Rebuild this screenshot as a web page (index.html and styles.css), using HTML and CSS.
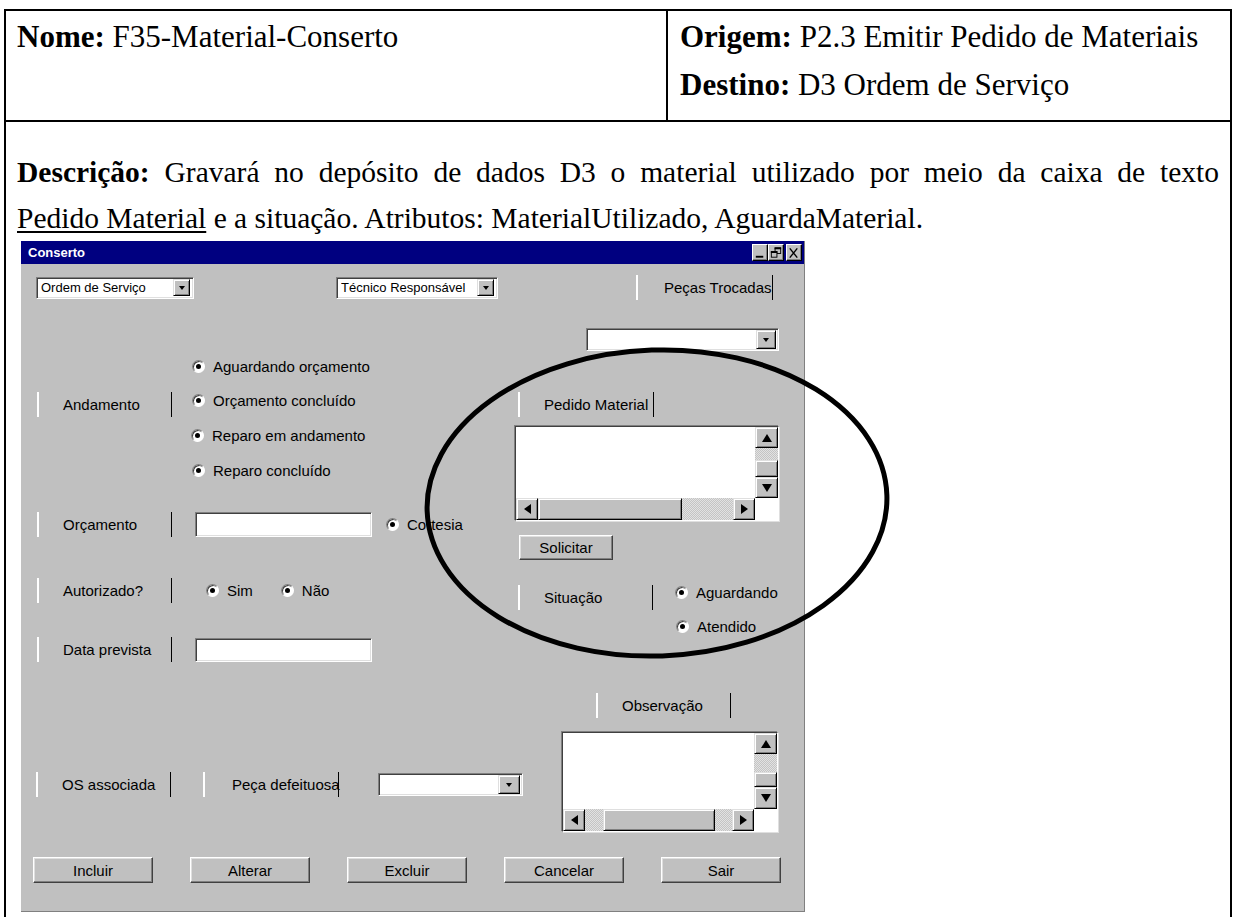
FILE: index.html
```html
<!DOCTYPE html>
<html lang="pt-BR">
<head>
<meta charset="utf-8">
<title>F35-Material-Conserto</title>
<link rel="stylesheet" href="styles.css">
</head>
<body>
<div class="sheet">
  <div class="head">
    <div class="cell cell-name">
      <p><b>Nome:</b> F35-Material-Conserto</p>
    </div>
    <div class="cell cell-flow">
      <p><b>Origem:</b> P2.3 Emitir Pedido de Materiais</p>
      <p><b>Destino:</b> D3 Ordem de Serviço</p>
    </div>
  </div>
  <div class="cell cell-desc">
    <p class="desc"><b>Descrição:</b> Gravará no depósito de dados D3 o material utilizado por meio da caixa de texto <u>Pedido&nbsp;Material</u> e a situação. Atributos: MaterialUtilizado, AguardaMaterial.</p>

    <div class="win">
      <div class="titlebar">
        <span class="title">Conserto</span>
        <div class="tbtns">
          <span class="tbtn"><svg width="15" height="14" viewBox="0 0 15 14"><rect x="3" y="10" width="8" height="2" fill="#000"/></svg></span>
          <span class="tbtn"><svg width="15" height="14" viewBox="0 0 15 14"><rect x="6.5" y="1.5" width="6" height="6" fill="none" stroke="#000"/><rect x="6" y="1" width="7" height="2" fill="#000"/><rect x="2.5" y="5.5" width="6" height="6" fill="#c0c0c0" stroke="#000"/><rect x="2" y="5" width="7" height="2" fill="#000"/></svg></span>
          <span class="tbtn tbtn-close"><svg width="15" height="14" viewBox="0 0 15 14"><path d="M3 2 L11 12 M11 2 L3 12" stroke="#000" stroke-width="1.5"/></svg></span>
        </div>
      </div>

      <div class="form">
        <div class="row-top">
          <div class="combo combo-os"><span class="combo-text">Ordem de Serviço</span><span class="drop drop-sm"><i class="tri-sm"></i></span></div>
          <div class="combo combo-tec"><span class="combo-text">Técnico Responsável</span><span class="drop drop-sm"><i class="tri-sm"></i></span></div>
          <div class="lbl lbl-pecas">Peças Trocadas</div>
        </div>

        <div class="mid">
          <div class="mid-left">
            <div class="andamento">
              <div class="lbl lbl-and">Andamento</div>
              <div class="radios radios-and">
                <div class="opt"><span class="radio"></span>Aguardando orçamento</div>
                <div class="opt"><span class="radio"></span>Orçamento concluído</div>
                <div class="opt opt-shift"><span class="radio"></span>Reparo em andamento</div>
                <div class="opt"><span class="radio"></span>Reparo concluído</div>
              </div>
            </div>
            <div class="frow frow-orc">
              <div class="lbl">Orçamento</div>
              <div class="field"></div>
              <div class="opt opt-cortesia"><span class="radio"></span>Cortesia</div>
            </div>
            <div class="frow frow-aut">
              <div class="lbl">Autorizado?</div>
              <div class="opt opt-sim"><span class="radio"></span>Sim</div>
              <div class="opt opt-nao"><span class="radio"></span>Não</div>
            </div>
            <div class="frow frow-data">
              <div class="lbl">Data prevista</div>
              <div class="field field-data"></div>
            </div>
          </div>

          <div class="mid-right">
            <div class="combo combo-pecas"><span class="combo-text"></span><span class="drop"><i class="tri-sm"></i></span></div>
            <div class="lbl lbl-pedido">Pedido Material</div>
            <div class="memo memo-pedido">
              <div class="memo-text"></div>
              <div class="vsb">
                <span class="sbtn sb-v"><i class="arr arr-up"></i></span>
                <span class="track track-a"></span>
                <span class="thumb thumb-v1"></span>
                <span class="sbtn sb-v"><i class="arr arr-down"></i></span>
              </div>
              <div class="hsb">
                <span class="sbtn sb-h"><i class="arr arr-left"></i></span>
                <span class="thumb thumb-h1"></span>
                <span class="track"></span>
                <span class="sbtn sb-h"><i class="arr arr-right"></i></span>
              </div>
              <div class="corner"></div>
            </div>
            <div class="btn btn-sol">Solicitar</div>
            <div class="situacao">
              <div class="lbl lbl-sit">Situação</div>
              <div class="radios radios-sit">
                <div class="opt"><span class="radio"></span>Aguardando</div>
                <div class="opt opt-atendido"><span class="radio"></span>Atendido</div>
              </div>
            </div>
          </div>
        </div>

        <div class="low">
          <div class="low-left">
            <div class="frow frow-os">
              <div class="lbl">OS associada</div>
              <div class="lbl lbl-peca">Peça defeituosa</div>
              <div class="combo combo-peca"><span class="combo-text"></span><span class="drop"><i class="tri-sm"></i></span></div>
            </div>
          </div>
          <div class="low-right">
            <div class="lbl lbl-obs">Observação</div>
            <div class="memo memo-obs">
              <div class="memo-text"></div>
              <div class="vsb">
                <span class="sbtn sb-v"><i class="arr arr-up"></i></span>
                <span class="track track-b"></span>
                <span class="thumb thumb-v2"></span>
                <span class="sbtn sb-v"><i class="arr arr-down"></i></span>
              </div>
              <div class="hsb">
                <span class="sbtn sb-h"><i class="arr arr-left"></i></span>
                <span class="track track-c"></span>
                <span class="thumb thumb-h2"></span>
                <span class="track"></span>
                <span class="sbtn sb-h"><i class="arr arr-right"></i></span>
              </div>
              <div class="corner"></div>
            </div>
          </div>
        </div>

        <div class="btnrow">
          <div class="btn">Incluir</div>
          <div class="btn">Alterar</div>
          <div class="btn">Excluir</div>
          <div class="btn">Cancelar</div>
          <div class="btn">Sair</div>
        </div>
      </div>
    </div>
  </div>
</div>

<!-- hand-drawn highlight around the material request area -->
<svg class="ring" width="1235" height="917" viewBox="0 0 1235 917">
  <ellipse cx="657" cy="503" rx="230" ry="153" transform="rotate(-2 657 503)" fill="none" stroke="#000" stroke-width="5"/>
</svg>
</body>
</html>
```

FILE: styles.css
```css
body {
  margin: 0;
  background: #fff;
  color: #000;
  font-family: "Liberation Serif", "Times New Roman", serif;
  position: relative;
  height: 917px;
  overflow: hidden;
}

/* document table */
.sheet {
  margin: 9px 0 0 4px;
  width: 1228px;
  box-sizing: border-box;
  border: 2px solid #000;
  border-bottom: none;
}
.head {
  display: grid;
  grid-template-columns: 662px 1fr;
  border-bottom: 2px solid #000;
}
.cell p {
  margin: 0;
  font-size: 31px;
  line-height: 48px;
  white-space: nowrap;
}
.cell-name {
  padding: 2px 11px 11px;
  border-right: 2px solid #000;
}
.cell-flow {
  padding: 2px 12px 11px;
}
.cell-desc {
  padding: 27px 11px 40px;
}
.cell .desc {
  white-space: normal;
  text-align: justify;
  font-size: 29.5px;
  line-height: 46px;
}
.desc u {
  text-decoration-thickness: 2px;
  text-underline-offset: 3px;
}

/* form window */
.win {
  margin-left: 4px;
  width: 784px;
  box-sizing: border-box;
  border-right: 1px solid #808080;
  border-bottom: 1px solid #808080;
  font-family: "Liberation Sans", Arial, sans-serif;
  font-size: 15px;
}
.titlebar {
  height: 23px;
  background: #000080;
  color: #fff;
  display: flex;
  align-items: center;
  justify-content: space-between;
  padding: 0 2px 0 7px;
}
.title {
  font-weight: bold;
  font-size: 13px;
}
.tbtns {
  display: flex;
}
.tbtn {
  width: 16px;
  height: 17px;
  box-sizing: border-box;
  background: #c0c0c0;
  border: 1px solid;
  border-color: #fff #000 #000 #fff;
  box-shadow: inset -1px -1px 0 #808080;
  display: flex;
  align-items: center;
  justify-content: center;
}
.tbtn svg { display: block; }
.tbtn-close { margin-left: 2px; }

.form {
  background: #c0c0c0;
  height: 647px;
  box-sizing: border-box;
  padding-top: 11px;
}

/* caption with etched bars */
.lbl {
  box-sizing: border-box;
  width: 135px;
  height: 25px;
  flex: none;
  border-left: 2px solid #fff;
  border-right: 1px solid #000;
  padding-left: 24px;
  display: flex;
  align-items: center;
  white-space: nowrap;
}

/* drop-down list */
.combo {
  box-sizing: border-box;
  height: 23px;
  background: #fff;
  border: 1px solid;
  border-color: #808080 #fff #fff #808080;
  box-shadow: inset 1px 1px 0 #404040, inset -1px -1px 0 #dfdfdf;
  display: flex;
  align-items: center;
  padding: 2px 2px 2px 4px;
  flex: none;
}
.combo-text {
  flex: 1;
  white-space: nowrap;
  overflow: hidden;
}
.drop {
  width: 20px;
  height: 19px;
  box-sizing: border-box;
  background: #c0c0c0;
  border: 1px solid;
  border-color: #dfdfdf #000 #000 #dfdfdf;
  box-shadow: inset 1px 1px 0 #fff, inset -1px -1px 0 #808080;
  display: flex;
  align-items: center;
  justify-content: center;
  flex: none;
}
.drop-sm {
  width: 17px;
  height: 17px;
}
.tri-sm {
  width: 0;
  height: 0;
  border-left: 3.5px solid transparent;
  border-right: 3.5px solid transparent;
  border-top: 4px solid #000;
}

.row-top {
  display: flex;
  align-items: center;
  height: 25px;
  padding-left: 15px;
}
.row-top .combo {
  font-size: 13px;
  height: 22px;
}
.combo-os { width: 158px; padding-right: 3px; }
.combo-tec { width: 162px; margin-left: 142px; padding-right: 3px; }
.lbl-pecas { width: 137px; margin-left: 138px; padding-left: 26px; }

/* option buttons */
.opt {
  display: flex;
  align-items: center;
  gap: 8px;
  height: 20px;
  white-space: nowrap;
}
.radio {
  width: 13px;
  height: 13px;
  box-sizing: border-box;
  border-radius: 50%;
  background: #fff;
  border: 1px solid;
  border-color: #808080 #fff #fff #808080;
  box-shadow: inset 1px 1px 0 #404040;
  display: flex;
  align-items: center;
  justify-content: center;
  flex: none;
}
.radio::after {
  content: "";
  width: 5px;
  height: 5px;
  border-radius: 50%;
  background: #000;
}

/* text box */
.field {
  box-sizing: border-box;
  width: 177px;
  height: 25px;
  background: #fff;
  border: 1px solid;
  border-color: #808080 #fff #fff #808080;
  box-shadow: inset 1px 1px 0 #404040, inset -1px -1px 0 #dfdfdf;
  flex: none;
}

/* command buttons */
.btn {
  box-sizing: border-box;
  width: 120px;
  height: 26px;
  background: #c0c0c0;
  border: 1px solid;
  border-color: #fff #404040 #404040 #fff;
  box-shadow: inset -1px -1px 0 #808080, inset 1px 1px 0 #dfdfdf;
  display: flex;
  align-items: center;
  justify-content: center;
  flex: none;
}

/* middle band */
.mid {
  display: grid;
  grid-template-columns: 484px 1fr;
  height: 362px;
}
.andamento {
  display: flex;
  align-items: flex-start;
  margin-top: 56px;
  padding-left: 16px;
}
.lbl-and { margin-top: 36px; }
.radios {
  display: flex;
  flex-direction: column;
}
.radios-and {
  margin-left: 20px;
  gap: 14.7px;
}
.opt-shift { margin-left: -1px; }
.frow {
  display: flex;
  align-items: center;
  height: 25px;
  padding-left: 16px;
}
.frow-orc { margin-top: 32px; }
.frow-orc .field { margin-left: 23px; height: 25px; }
.opt-cortesia { margin-left: 14px; }
.frow-aut { margin-top: 41px; }
.opt-sim { margin-left: 34px; }
.opt-nao { margin-left: 28px; }
.frow-data { margin-top: 34px; }
.field-data { margin-left: 23px; height: 24px; }

.combo-pecas { width: 193px; margin: 28px 0 0 81px; }
.lbl-pedido { width: 136px; margin: 41px 0 0 13px; }

/* multi-line text box with scroll bars */
.memo {
  box-sizing: border-box;
  display: grid;
  background: #fff;
  border: 1px solid;
  border-color: #404040 #fff #fff #404040;
  box-shadow: -1px -1px 0 #808080, 1px 1px 0 #dfdfdf;
}
.memo-pedido {
  width: 264px;
  height: 95px;
  margin: 9px 0 0 10px;
  grid-template-columns: 1fr 23px;
  grid-template-rows: 1fr 22px;
}
.memo-obs {
  width: 216px;
  height: 100px;
  margin: 14px 0 0 1px;
  grid-template-columns: 1fr 23px;
  grid-template-rows: 1fr 22px;
}
.vsb {
  display: flex;
  flex-direction: column;
}
.hsb {
  display: flex;
}
.corner { background: #fff; }
.sbtn, .thumb {
  box-sizing: border-box;
  background: #c0c0c0;
  border: 1px solid;
  border-color: #dfdfdf #000 #000 #dfdfdf;
  box-shadow: inset 1px 1px 0 #fff, inset -1px -1px 0 #808080;
  display: flex;
  align-items: center;
  justify-content: center;
  flex: none;
}
.sb-v { height: 21px; }
.sb-h { width: 22px; }
.track {
  flex: 1;
  background: repeating-conic-gradient(#c4c4c4 0 25%, #e2e2e2 0 50%) 0 0 / 2px 2px;
}
.track-a { flex: none; height: 12px; }
.track-b { flex: none; height: 18px; }
.track-c { flex: none; width: 18px; }
.thumb-v1 { height: 17px; }
.thumb-v2 { height: 15px; }
.thumb-h1 { width: 144px; }
.thumb-h2 { width: 112px; }
.memo-obs .vsb .sbtn:last-child { height: 22px; }

.arr { width: 0; height: 0; }
.arr-up {
  border-left: 5.5px solid transparent;
  border-right: 5.5px solid transparent;
  border-bottom: 8px solid #000;
}
.arr-down {
  border-left: 5.5px solid transparent;
  border-right: 5.5px solid transparent;
  border-top: 8px solid #000;
}
.arr-left {
  border-top: 5px solid transparent;
  border-bottom: 5px solid transparent;
  border-right: 7px solid #000;
}
.arr-right {
  border-top: 5px solid transparent;
  border-bottom: 5px solid transparent;
  border-left: 7px solid #000;
}

.btn-sol { width: 94px; height: 25px; margin: 14px 0 0 14px; }
.situacao {
  display: flex;
  align-items: flex-start;
  margin: 25px 0 0 13px;
}
.lbl-sit { width: 135px; }
.radios-sit {
  margin: -3px 0 0 22px;
  gap: 14px;
}
.opt-atendido { margin-left: 1px; }

/* lower band */
.low {
  display: grid;
  grid-template-columns: 540px 1fr;
  height: 170px;
}
.frow-os {
  margin-top: 110px;
  padding-left: 15px;
}
.lbl-peca { width: 136px; margin-left: 32px; padding-left: 27px; }
.combo-peca { width: 145px; margin-left: 39px; }
.combo-peca .drop { width: 22px; height: 19px; }
.lbl-obs { margin: 31px 0 0 35px; }

.btnrow {
  display: flex;
  gap: 37px;
  margin-top: 25px;
  padding-left: 12px;
}

/* highlight ring over the form */
.ring {
  position: absolute;
  left: 0;
  top: 0;
  pointer-events: none;
}
```
